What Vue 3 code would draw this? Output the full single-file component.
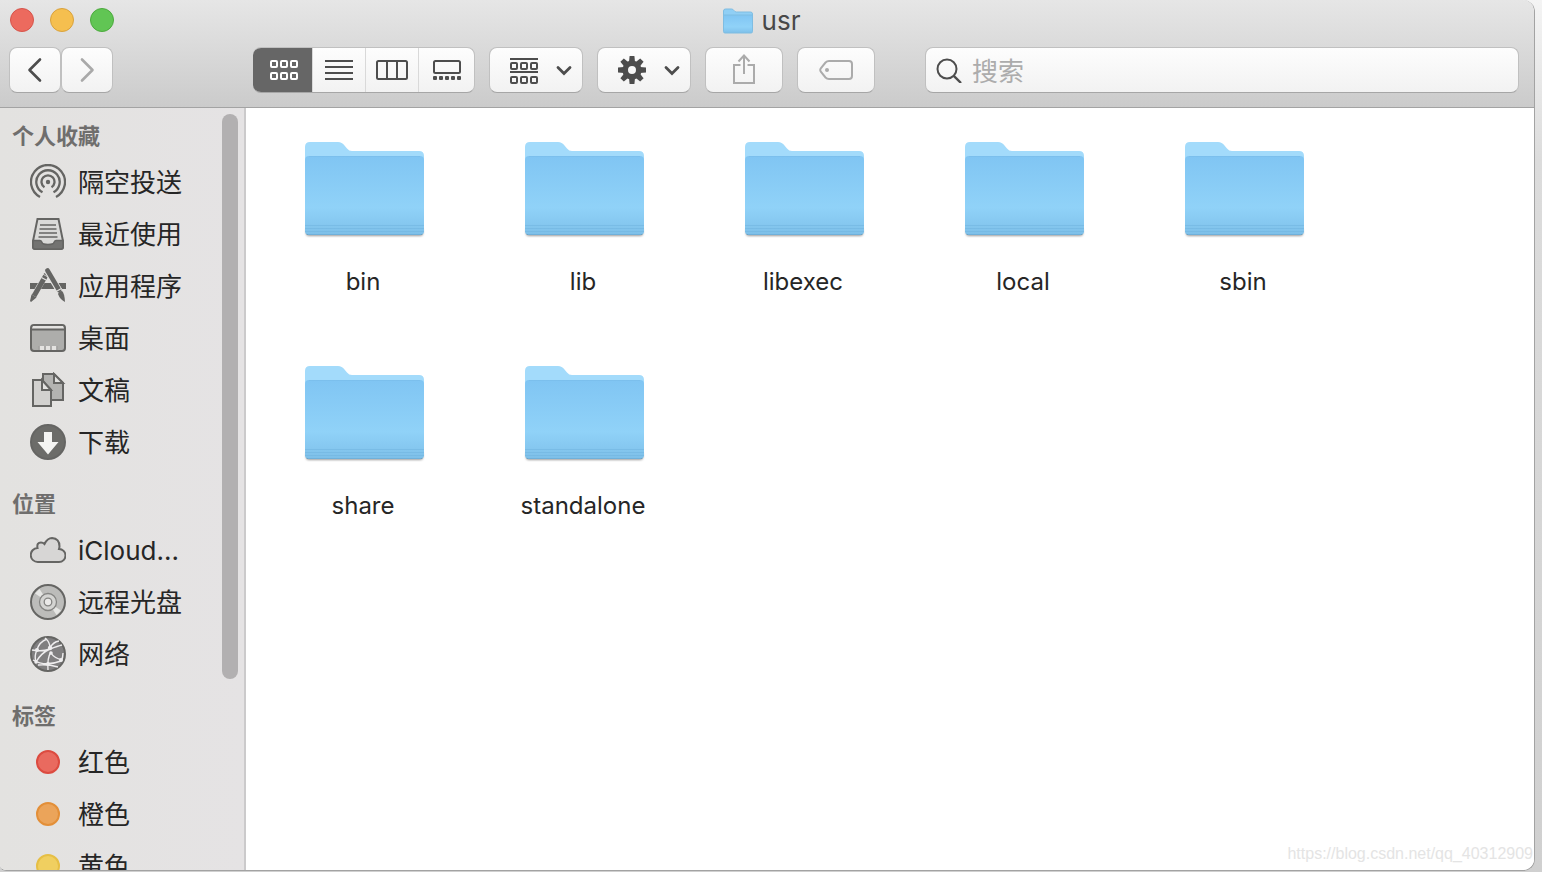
<script setup>
import { ref } from 'vue'

const query = ref('')
const folders = ['bin', 'lib', 'libexec', 'local', 'sbin', 'share', 'standalone']
const sections = [
  {
    title: '个人收藏',
    items: [
      { label: '隔空投送', icon: 'airdrop' },
      { label: '最近使用', icon: 'recents' },
      { label: '应用程序', icon: 'apps' },
      { label: '桌面', icon: 'desktop' },
      { label: '文稿', icon: 'documents' },
      { label: '下载', icon: 'downloads' }
    ]
  },
  {
    title: '位置',
    items: [
      { label: 'iCloud...', icon: 'cloud' },
      { label: '远程光盘', icon: 'disc' },
      { label: '网络', icon: 'network' }
    ]
  },
  {
    title: '标签',
    items: [
      { label: '红色', icon: 'tag', tone: 'red' },
      { label: '橙色', icon: 'tag', tone: 'orange' },
      { label: '黄色', icon: 'tag', tone: 'yellow' }
    ]
  }
]
</script>

<template>
  <div class="screen">
    <div class="window">
      <header class="titlebar">
        <div class="title-row">
          <div class="lights">
            <button class="light close" aria-label="关闭"></button>
            <button class="light minimize" aria-label="最小化"></button>
            <button class="light maximize" aria-label="缩放"></button>
          </div>
          <h1 class="title">
            <svg width="32" height="26" viewBox="0 0 32 26" aria-hidden="true">
              <path d="M1.500 3q0-2 2-2h6q1.500 0 2.500 1.500t2.500 1.500h14q2 0 2 2v5h-29z" fill="#90cff5" stroke="#7fbde2" />
              <path d="M1.500 7h29v16.500q0 1.500-1.500 1.500h-26q-1.500 0-1.500-1.500z" fill="url(#folderFront)" stroke="#7fbde2" />
            </svg>
            usr
          </h1>
        </div>

        <div class="toolbar">
          <div class="nav">
            <button class="btn nav-btn" aria-label="后退">
              <svg width="16" height="26" viewBox="0 0 16 26"><path d="M13 2.500 2.500 13 13 23.500" fill="none" stroke="#4d4d4d" stroke-width="2.600" stroke-linecap="round" stroke-linejoin="round" /></svg>
            </button>
            <button class="btn nav-btn" aria-label="前进">
              <svg width="16" height="26" viewBox="0 0 16 26"><path d="M3 2.500 13.500 13 3 23.500" fill="none" stroke="#a9a9a9" stroke-width="2.600" stroke-linecap="round" stroke-linejoin="round" /></svg>
            </button>
          </div>

          <div class="btn views" role="group" aria-label="显示方式">
            <button class="seg active" aria-label="图标" aria-pressed="true">
              <svg width="28" height="20" viewBox="0 0 28 20" fill="none" stroke="#fff" stroke-width="2">
                <template v-for="y in [1, 13]" :key="y">
                  <rect v-for="x in [1, 11, 21]" :key="x" :x="x" :y="y" width="6" height="6" rx="1" />
                </template>
              </svg>
            </button>
            <button class="seg" aria-label="列表" aria-pressed="false">
              <svg width="28" height="20" viewBox="0 0 28 20"><path d="M0 1h28M0 7h28M0 13h28M0 19h28" stroke="#4d4d4d" stroke-width="2" /></svg>
            </button>
            <button class="seg" aria-label="分栏" aria-pressed="false">
              <svg width="32" height="20" viewBox="0 0 32 20" fill="none" stroke="#4d4d4d" stroke-width="2"><rect x="1" y="1" width="30" height="18" rx="1.500" /><path d="M11 1v18M21 1v18" /></svg>
            </button>
            <button class="seg last" aria-label="画廊" aria-pressed="false">
              <svg width="28" height="20" viewBox="0 0 28 20" fill="none" stroke="#4d4d4d" stroke-width="2">
                <rect x="1" y="1" width="26" height="12" rx="1.500" />
                <rect v-for="x in [0, 6, 12, 18, 24]" :key="x" :x="x" y="16" width="4" height="4" rx="1" fill="#4d4d4d" stroke="none" />
              </svg>
            </button>
          </div>

          <button class="btn menu" aria-label="分组" aria-haspopup="menu">
            <svg width="28" height="28" viewBox="0 0 28 28" fill="none" stroke="#4d4d4d" stroke-width="2">
              <path d="M0 3h28M0 16h28" />
              <template v-for="y in [7, 21]" :key="y">
                <rect v-for="x in [1, 11, 21]" :key="x" :x="x" :y="y" width="6" height="6" rx="1" />
              </template>
            </svg>
            <svg width="16" height="12" viewBox="0 0 16 12"><path d="M2 3.500l6 6 6-6" fill="none" stroke="#4d4d4d" stroke-width="2.800" stroke-linecap="round" /></svg>
          </button>

          <button class="btn menu" aria-label="操作" aria-haspopup="menu">
            <svg width="28" height="28" viewBox="-14 -14 28 28">
              <g fill="#4d4d4d">
                <path v-for="a in [0, 45, 90, 135, 180, 225, 270, 315]" :key="a" :transform="`rotate(${a})`" d="M-3-8-2.400-14h4.800l.6 6z" />
              </g>
              <circle r="6.800" fill="none" stroke="#4d4d4d" stroke-width="5.600" />
            </svg>
            <svg width="16" height="12" viewBox="0 0 16 12"><path d="M2 3.500l6 6 6-6" fill="none" stroke="#4d4d4d" stroke-width="2.800" stroke-linecap="round" /></svg>
          </button>

          <button class="btn wide" aria-label="共享">
            <svg width="24" height="32" viewBox="0 0 24 32" fill="none" stroke="#ababab" stroke-width="2"><path d="M8.500 11H2v18h20V11h-6.500M12 20V1.500M6.500 7.500 12 1.500l5.500 6" /></svg>
          </button>
          <button class="btn wide" aria-label="标签">
            <svg width="34" height="20" viewBox="0 0 34 20" fill="none" stroke="#ababab" stroke-width="2"><path d="M10 1h20q3 0 3 3v12q0 3-3 3H10q-2 0-3.500-1.500L2 12q-1.500-2 0-4l4.500-5.500Q8 1 10 1z" /><circle cx="8" cy="10" r="2" fill="#ababab" stroke="none" /></svg>
          </button>

          <label class="btn search">
            <svg width="26" height="26" viewBox="0 0 26 26" fill="none" stroke="#4d4d4d" stroke-width="2"><circle cx="11" cy="12" r="9.500" /><path d="M17.800 18.800 25 26" stroke-width="2.400" /></svg>
            <input v-model="query" type="text" placeholder="搜索" aria-label="搜索" />
          </label>
        </div>
      </header>

      <div class="body">
        <aside class="sidebar">
          <nav>
            <section v-for="s in sections" :key="s.title" class="section">
              <h2>{{ s.title }}</h2>
              <a v-for="i in s.items" :key="i.label" href="#" class="item">
                <svg width="36" height="36" viewBox="0 0 36 36" fill="none" stroke="#656563" stroke-width="2" aria-hidden="true">
                  <template v-if="i.icon === 'airdrop'">
                    <path d="M10 33A17 17 0 1 1 26 33M12.500 28.300A11.700 11.700 0 1 1 23.500 28.300M14.500 23.300A6.500 6.500 0 1 1 21.500 23.300" stroke-width="2.300" />
                    <circle cx="18" cy="18" r="2.200" fill="#656563" stroke="none" />
                  </template>
                  <template v-else-if="i.icon === 'recents'">
                    <path d="M7.500 3h21L33 25v6q0 2-2 2H5q-2 0-2-2v-6z" fill="#dadad8" />
                    <path d="M3 24.500h7q1.500 0 2 2t6 2 6-2 2-2h7V31q0 2-2 2H5q-2 0-2-2z" fill="#737371" stroke-width="1.500" />
                    <path d="M10 9h16M9.500 13h17M9 17h18M8.500 21h19" stroke-width="1.700" />
                  </template>
                  <template v-else-if="i.icon === 'apps'">
                    <path d="M0 15h8l-3.500 6H0zM14.500 15h7l3.500 6h-14zM28 15h8v6h-4.500z" fill="#656563" stroke="none" />
                    <path d="M15.500 8 4 28" stroke-width="5" />
                    <path d="M1.500 26.500 6.500 29.500 1 34 0 33zM13.500 6l2-1.500 3 2-.5 2.500z" fill="#656563" stroke="none" />
                    <path d="M17.500 3 30 24" stroke="#e3e2e0" stroke-width="6.500" />
                    <path d="M17.500 2.500 29 22" stroke-width="4.600" stroke-linecap="round" />
                    <path d="M26 23.500 31.500 20.500" stroke="#e3e2e0" stroke-width="1.200" />
                    <path d="M28 26q1-3 4-3 2.500 2 3 11-5-2.500-7-8z" fill="#656563" stroke="none" />
                    <path d="M11.500 9.500 16 12" stroke="#e3e2e0" stroke-width="1.200" />
                  </template>
                  <template v-else-if="i.icon === 'desktop'">
                    <rect x="1" y="5" width="34" height="26" rx="3" fill="#adadab" />
                    <path d="M3 6h30l1 3H2z" fill="#e4e3e1" stroke="none" />
                    <path d="M1 9.500h34" />
                    <path d="M8.500 26h19v4h-19z" fill="#e4e3e1" stroke="none" />
                    <path d="M9 26v4M15 26v4M21 26v4M27 26v4" stroke="#989896" stroke-width="1.500" />
                  </template>
                  <template v-else-if="i.icon === 'documents'">
                    <path d="M13 2h11l9 9v17H13z" fill="#b3b3b1" />
                    <path d="M24 2v9h9z" fill="#e0e0de" />
                    <path d="M3 8h9l9 10v16H3z" fill="#d2d1cf" />
                    <path d="M12 8v10h9z" fill="#e4e3e1" />
                  </template>
                  <template v-else-if="i.icon === 'downloads'">
                    <circle cx="18" cy="18" r="17" fill="#6c6c69" />
                    <path d="M14 8h8v10h6.500L18 30.500 7.500 18H14z" fill="#f4f4f2" stroke="none" />
                  </template>
                  <path v-else-if="i.icon === 'cloud'" d="M8 30a7 7 0 0 1-.5-14Q6.500 10.500 11 10.500q2 0 3.500 1.500Q17.500 6 22 6q7.500.5 7.500 8.500-.1 1-.5 2.500A6.500 6.500 0 0 1 29 30z" fill="#d7d6d5" />
                  <template v-else-if="i.icon === 'disc'">
                    <circle cx="18" cy="18" r="17" fill="#bcbcba" />
                    <path d="M18 18 5 9.500 9.500 5zM18 18l13 8.500-4.500 4.500z" fill="#e6e6e4" stroke="none" />
                    <circle cx="18" cy="18" r="8.500" fill="#d4d4d2" stroke="#858583" stroke-width="1.300" />
                    <circle cx="18" cy="18" r="3.800" fill="#eae9e8" stroke="#858583" stroke-width="1.300" />
                  </template>
                  <template v-else-if="i.icon === 'network'">
                    <circle cx="18" cy="18" r="17" fill="#807f80" />
                    <g stroke="#eeedee" stroke-width="1.400">
                      <path d="M2 14Q12 16 20 13T32 9M20 12Q20 6 15 2M7 14Q9 6 17 3M20 12Q23 6 29 5M7 14Q4 20 6 26M20 13Q11 17 6 26M21 16Q17 22 18 34M21 17q3 5 11 7M3 24Q15 31 31 25M31 25q2-3 2-8M8 29Q18 28 28 31" />
                    </g>
                    <g fill="#eeedee" stroke="none"><circle cx="7" cy="14" r="2" /><circle cx="20" cy="12" r="2.200" /><circle cx="21" cy="17" r="1.800" /><circle cx="18" cy="28" r="2" /><circle cx="31" cy="24" r="2" /><circle cx="6" cy="26" r="1.700" /></g>
                  </template>
                  <circle v-else cx="18" cy="18" r="11" :class="i.tone" />
                </svg>
                <span class="label">{{ i.label }}</span>
              </a>
            </section>
          </nav>
          <div class="scrollbar" aria-hidden="true"></div>
        </aside>

        <main class="files">
          <a v-for="f in folders" :key="f" href="#" class="file">
            <svg width="128" height="104" viewBox="0 0 128 104" aria-hidden="true">
              <defs>
                <linearGradient id="folderFront" x1="0" y1="0" x2="0" y2="1">
                  <stop offset="0" stop-color="#80c5f3" />
                  <stop offset="0.650" stop-color="#90d2f8" />
                  <stop offset="0.850" stop-color="#86c8f0" />
                  <stop offset="1" stop-color="#7dbfe8" />
                </linearGradient>
              </defs>
              <rect class="shade" x="7" y="89" width="117" height="8" rx="3" />
              <path d="M6 9q0-5 5-5h28q4 0 6.500 3.500l2.500 3q2 2.500 5 2.500h67q5 0 5 5v20H6z" fill="#a3dbfb" />
              <path d="M6 22q0-4 4-4h111q4 0 4 4v71q0 4-4 4H10q-4 0-4-4z" fill="url(#folderFront)" />
              <path d="M6 87.500h119M6 90.500h119M6 93.500h119" stroke="#6db1de" stroke-opacity="0.500" />
              <path d="M9 96.500h113" stroke="#6fb0da" />
              <path d="M10 18.500h111" stroke="#75bae8" stroke-opacity="0.500" />
            </svg>
            <span>{{ f }}</span>
          </a>
          <div class="watermark">https://blog.csdn.net/qq_40312909</div>
        </main>
      </div>
    </div>
  </div>
</template>

<style>
body {
  margin: 0;
}
</style>

<style scoped>
* {
  box-sizing: border-box;
}
.screen {
  height: 100vh;
  padding: 0 7px 1px 0;
  background: linear-gradient(#f4f4f4, #dcdcdc 160px, #d0d0d0);
  font-family: Inter, "Noto Sans CJK SC", sans-serif;
  color: #262626;
}
.window {
  display: flex;
  flex-direction: column;
  height: 100%;
  overflow: hidden;
  border: solid #a3a3a3;
  border-width: 0 1px 1px 0;
  border-radius: 0 12px 12px 6px;
  background: #fff;
}
.titlebar {
  flex: none;
  border-bottom: 1px solid #a3a3a3;
  background: linear-gradient(#e6e6e6, #cbcbcb);
}
.title-row {
  display: grid;
  grid-template-columns: 1fr auto 1fr;
  align-items: center;
  height: 40px;
  padding: 0 22px 0 10px;
}
.lights {
  display: flex;
  gap: 16px;
}
.light {
  width: 24px;
  height: 24px;
  padding: 0;
  border: 1px solid;
  border-radius: 50%;
}
.close {
  border-color: #d6544b;
  background: #ec6a5e;
}
.minimize {
  border-color: #d9a23c;
  background: #f5bf4f;
}
.maximize {
  border-color: #4caa3d;
  background: #61c554;
}
.title {
  display: flex;
  align-items: center;
  gap: 8px;
  margin: 0;
  padding-top: 2px;
  font-size: 26px;
  font-weight: 400;
  line-height: 38px;
  color: #484848;
}
.toolbar {
  display: flex;
  gap: 14px;
  padding: 7px 15px 14px 9px;
}
.btn {
  display: flex;
  align-items: center;
  justify-content: center;
  flex: none;
  height: 46px;
  padding: 0;
  border: 1px solid #c0c0c0;
  border-bottom-color: #a6a6a6;
  border-radius: 8px;
  background: linear-gradient(#fdfdfd, #f2f2f2);
}
.nav {
  display: flex;
  margin-right: 126px;
}
.nav-btn {
  width: 52px;
}
.views {
  overflow: hidden;
  border-left: 0;
}
.seg {
  display: flex;
  align-items: center;
  justify-content: center;
  width: 53px;
  height: 46px;
  padding: 0;
  border: 0;
  border-left: 1px solid #d9d9d9;
  background: transparent;
}
.seg.active {
  width: 59px;
  padding-left: 2px;
  border: 0;
  background: #666;
}
.seg.last {
  width: 56px;
}
.menu {
  gap: 18px;
  width: 94px;
  padding-left: 10px;
}
.wide {
  width: 78px;
}
.search {
  flex: 1;
  gap: 10px;
  margin-left: 36px;
  padding: 0 10px;
}
.search svg {
  flex: none;
}
.search input {
  flex: 1;
  min-width: 0;
  padding: 2px 0 0;
  border: 0;
  outline: 0;
  background: transparent;
  font: 26px Inter, "Noto Sans CJK SC", sans-serif;
  color: #262626;
}
.search input::placeholder {
  color: #acacac;
  opacity: 1;
}
.body {
  display: flex;
  flex: 1;
  min-height: 0;
}
.sidebar {
  position: relative;
  flex: none;
  width: 246px;
  overflow: hidden;
  padding-top: 8px;
  border-right: 2px solid #cbcacb;
  background: linear-gradient(90deg, #e3e2e0, #e5e3e4);
}
.section + .section {
  margin-top: 16px;
}
h2 {
  margin: 0;
  padding-left: 12px;
  font-size: 22px;
  font-weight: 700;
  line-height: 40px;
  color: #6f6e6d;
}
.item {
  display: flex;
  align-items: center;
  gap: 12px;
  height: 52px;
  padding-left: 30px;
  font-size: 26px;
  line-height: 36px;
  color: inherit;
  text-decoration: none;
}
.label {
  padding-top: 2px;
}
.red {
  fill: #e96a5f;
  stroke: #dc4b40;
}
.orange {
  fill: #eba45a;
  stroke: #e38f38;
}
.yellow {
  fill: #f0cf60;
  stroke: #e6bf45;
}
.scrollbar {
  position: absolute;
  top: 6px;
  right: 6px;
  width: 16px;
  height: 565px;
  border-radius: 8px;
  background: #b2b0b1;
}
.files {
  position: relative;
  display: grid;
  flex: 1;
  grid-template-columns: repeat(auto-fill, 220px);
  grid-auto-rows: 224px;
  align-content: start;
  min-width: 0;
  padding-left: 7px;
  background: #fff;
}
.file {
  display: flex;
  flex-direction: column;
  align-items: center;
  gap: 24px;
  padding-top: 30px;
  font-size: 24px;
  line-height: 32px;
  color: inherit;
  text-decoration: none;
}
.shade {
  filter: drop-shadow(0 1px 1px #999);
}
.watermark {
  position: absolute;
  right: 1px;
  bottom: 6px;
  font: 16px/20px "Liberation Sans", sans-serif;
  color: #e4e4e4;
}
</style>
